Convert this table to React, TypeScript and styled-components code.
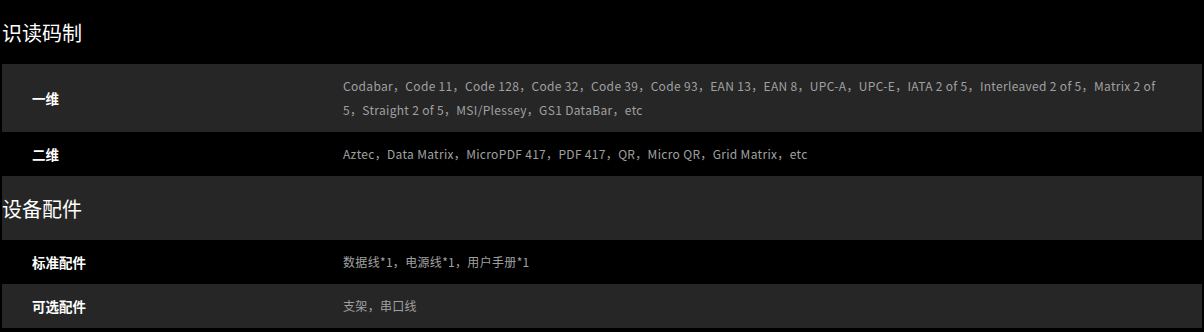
import { createGlobalStyle } from "styled-components";
import styled from "styled-components";

const GlobalStyle = createGlobalStyle`
  html, body {
    margin: 0;
    padding: 0;
    background: #000;
  }
  body {
    font-family: "Noto Sans CJK SC", "Microsoft YaHei", sans-serif;
  }
`;

const SpecTable = styled.div`
  padding: 0 2px;
  display: flex;
  flex-direction: column;
`;

const Row = styled.div<{ $shade: boolean }>`
  display: grid;
  grid-template-columns: 331px 1fr;
  background-color: ${(props) => (props.$shade ? "#262626" : "#000")};
`;

const SectionRow = styled.div<{ $shade: boolean }>`
  height: 64px;
  display: flex;
  align-items: center;
  background-color: ${(props) => (props.$shade ? "#262626" : "#000")};
`;

const SectionTitle = styled.h3`
  margin: 0;
  font-size: 20px;
  font-weight: normal;
  color: #fff;
`;

const Label = styled.div`
  display: flex;
  align-items: center;
  padding: 10px 0 10px 30px;
  font-size: 13.5px;
  font-weight: bold;
  color: #fff;
  line-height: 24px;
`;

const Value = styled.div`
  padding: 10px 32px 10px 10px;
  font-size: 12px;
  letter-spacing: 0.32px;
  color: #a0a0a0;
  line-height: 24px;
`;

type Item = { label: string; value: string };
type Section = { title: string; items: Item[] };

const sections: Section[] = [
  {
    title: "识读码制",
    items: [
      {
        label: "一维",
        value:
          "Codabar，Code 11，Code 128，Code 32，Code 39，Code 93，EAN 13，EAN 8，UPC-A，UPC-E，IATA 2 of 5，Interleaved 2 of 5，Matrix 2 of 5，Straight 2 of 5，MSI/Plessey，GS1 DataBar，etc",
      },
      {
        label: "二维",
        value:
          "Aztec，Data Matrix，MicroPDF 417，PDF 417，QR，Micro QR，Grid Matrix，etc",
      },
    ],
  },
  {
    title: "设备配件",
    items: [
      { label: "标准配件", value: "数据线*1，电源线*1，用户手册*1" },
      { label: "可选配件", value: "支架，串口线" },
    ],
  },
];

function App() {
  let index = 0;
  return (
    <>
      <GlobalStyle />
      <SpecTable>
        {sections.map((section) => {
          const titleShade = index++ % 2 === 1;
          return (
            <div key={section.title}>
              <SectionRow $shade={titleShade}>
                <SectionTitle>{section.title}</SectionTitle>
              </SectionRow>
              {section.items.map((item) => {
                const shade = index++ % 2 === 1;
                return (
                  <Row key={item.label} $shade={shade}>
                    <Label>{item.label}</Label>
                    <Value>{item.value}</Value>
                  </Row>
                );
              })}
            </div>
          );
        })}
      </SpecTable>
    </>
  );
}

export default App;
